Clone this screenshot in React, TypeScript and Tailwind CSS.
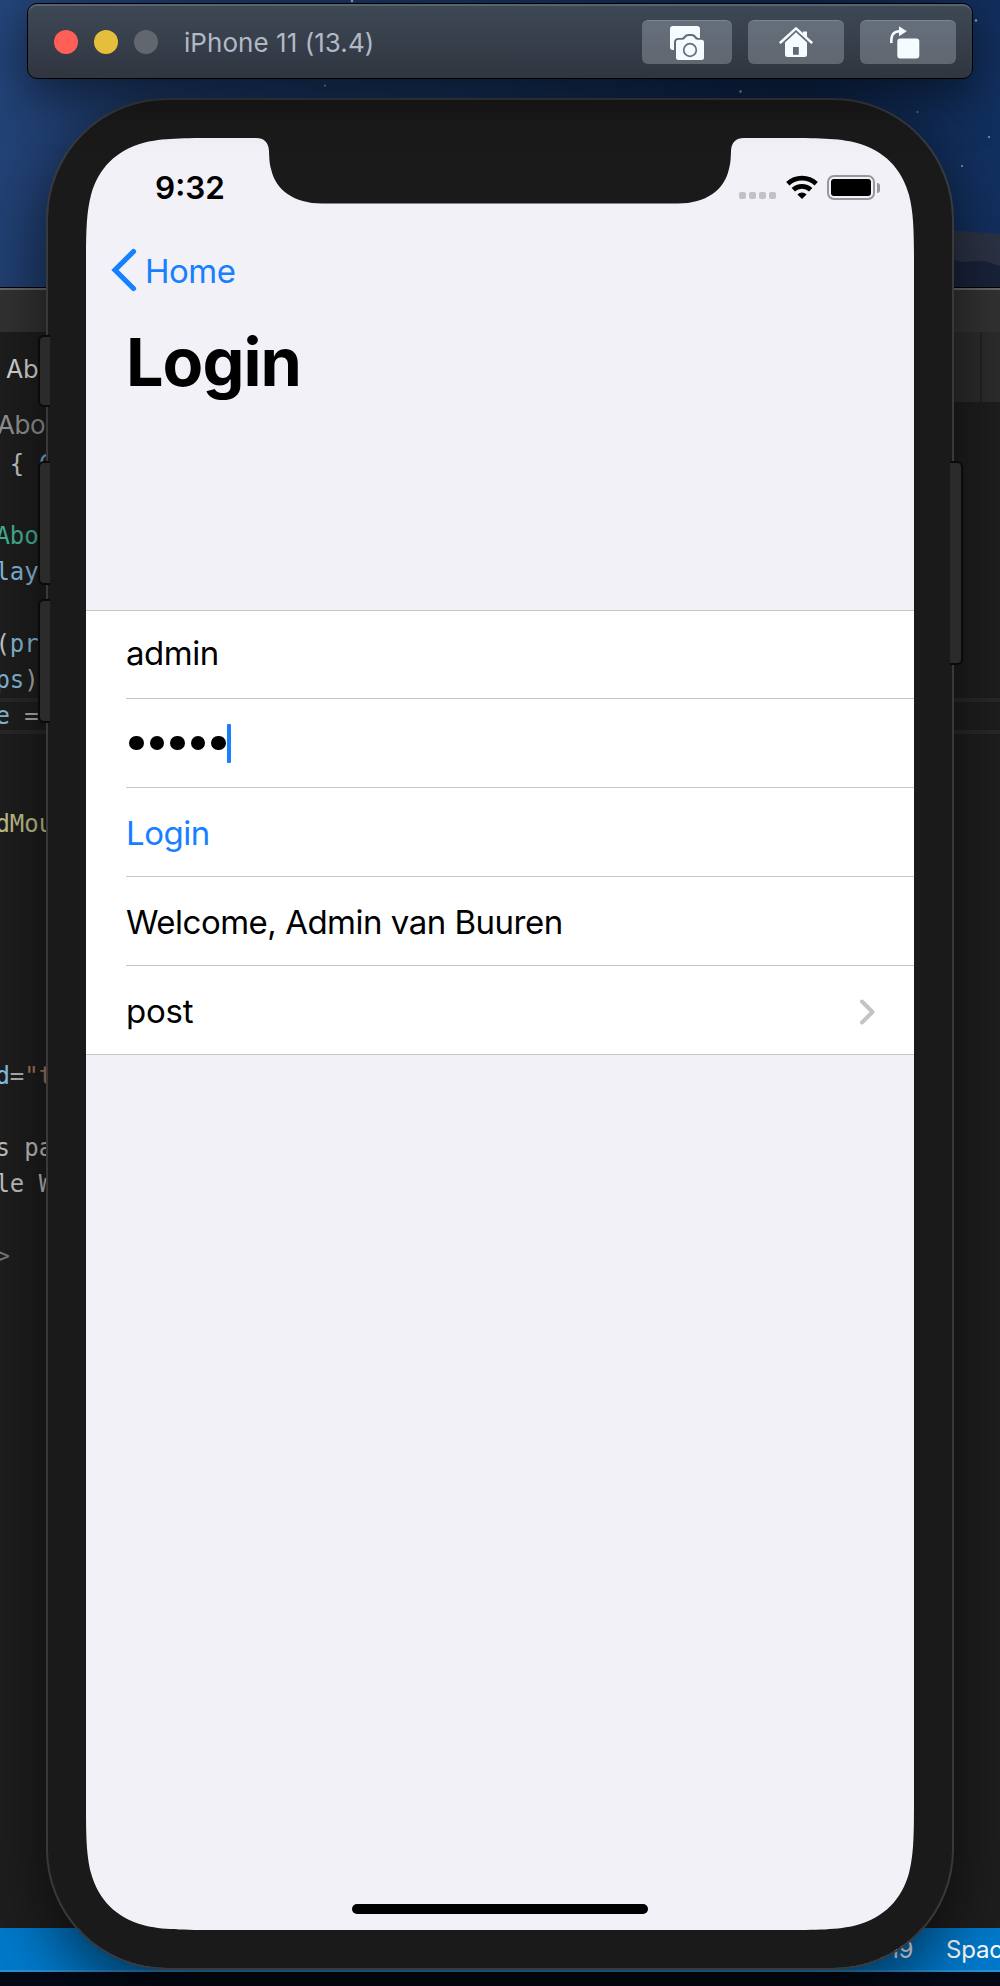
import React from "react";

type Token = { text: string; color: string };

const codeLines: Token[][] = [
  [{ text: " {", color: "text-[#c8c8c8]" }, { text: " C", color: "text-[#7fb4d4]" }],
  [],
  [{ text: "Abou", color: "text-[#45b59b]" }],
  [{ text: "layN", color: "text-[#86bcdc]" }],
  [],
  [{ text: "(", color: "text-[#c8c8c8]" }, { text: "pro", color: "text-[#86bcdc]" }],
  [{ text: "ps", color: "text-[#86bcdc]" }, { text: ")", color: "text-[#b0b0b0]" }],
  [{ text: "e", color: "text-[#86bcdc]" }, { text: " =", color: "text-[#b0b0b0]" }],
  [],
  [],
  [{ text: "dMou", color: "text-[#c4c48f]" }],
  [],
  [],
  [],
  [],
  [],
  [],
  [{ text: "d", color: "text-[#8cc8ee]" }, { text: "=", color: "text-[#b8b8b8]" }, { text: "\"t", color: "text-[#b07a62]" }],
  [],
  [{ text: "s pa", color: "text-[#c4c4c4]" }],
  [{ text: "le W", color: "text-[#c4c4c4]" }],
  [],
  [{ text: ">", color: "text-[#7a7a7a]" }],
];

function Wallpaper() {
  return (
    <div className="absolute inset-0 bg-[linear-gradient(100deg,#24447a_0px,#1b3865_180px,#14305a_500px,#0e2549_800px,#12305f_1000px)]">
      <svg className="absolute top-0 left-0" width="1000" height="290" viewBox="0 0 1000 290">
        <path d="M900 228 L922 226 L938 231 L954 230 L975 232 L1000 234 V290 H900Z" fill="#2c3345" />
        <path d="M900 248 L925 249 L940 256 L962 262 L985 261 L1000 266 V290 H900Z" fill="#19233a" />
        <g fill="#8fa3bf">
          <circle cx="352" cy="1" r="1.3" />
          <circle cx="976" cy="20.500" r="1.200" />
          <circle cx="325" cy="85.500" r="1" />
          <circle cx="740.500" cy="91.500" r="1.200" />
          <circle cx="917.500" cy="112" r=".8" />
          <circle cx="989" cy="137" r="1" />
          <circle cx="962" cy="166" r="1" />
        </g>
      </svg>
    </div>
  );
}

function EditorWindow() {
  return (
    <div className="absolute top-[287px] left-0 flex h-[1685px] w-full flex-col overflow-hidden border-t border-black bg-[#1e1e1e]">
      <div className="h-[44px] shrink-0 border-t-2 border-[#6a6a6a] bg-[#333333]" />
      <div className="flex h-[70px] shrink-0 bg-[#2d2d2d]">
        <div className="w-[500px] bg-[#1e1e1e] pt-[19px] pl-[6px] text-[25px] leading-[36px] text-[#dcdcdc]">About</div>
        <div className="w-[482px] border-r-2 border-[#232323]" />
      </div>
      <div className="-ml-[3px] h-[44px] shrink-0 pt-1 text-[26px] leading-[38px] tracking-[-0.400px] text-[#969696]">About</div>
      <div className="flex-1 font-['DejaVu_Sans_Mono',monospace] text-[24px] leading-[36px]">
        {codeLines.map((line, i) => (
          <div
            key={i}
            className={
              i === 7
                ? "flex h-[36px] items-center border-y-4 border-[#292929] whitespace-pre"
                : "flex h-[36px] items-center whitespace-pre"
            }
          >
            <span className="-ml-[4.6px]">
              {line.map((token, j) => (
                <span key={j} className={token.color}>{token.text}</span>
              ))}
            </span>
          </div>
        ))}
      </div>
      <div className="flex h-[44px] shrink-0 items-center justify-end gap-[33px] border-b-2 border-[#2b8fd6] bg-[#007acc] pt-px text-[24px] text-white">
        <span className="tracking-[-0.500px]">Col 19</span>
        <span className="w-[54px] overflow-hidden tracking-[-0.200px] whitespace-nowrap">Spaces: 4</span>
      </div>
    </div>
  );
}

function ScreenshotIcon() {
  return (
    <svg width="34" height="34" viewBox="0 0 34 34">
      <path d="M3 0H27Q30 0 30 3V12H28.500Q27 12 26 10.300Q24.500 8 21.500 8H18.500Q15.500 8 14 10.300Q13 12 11.500 12H8.500Q4 12 4 16.500V24H3Q0 24 0 21V3Q0 0 3 0Z" fill="#f5fcff" />
      <path d="M8.500 13.800H12.500Q14.500 13.800 15.500 11.800Q16.500 10 18.500 10H21.500Q23.500 10 24.500 11.800Q25.500 13.800 27.500 13.800H31.500Q34 13.800 34 16.300V31.500Q34 34 31.500 34H8.500Q6 34 6 31.500V16.300Q6 13.800 8.500 13.800Z" fill="#f5fcff" />
      <circle cx="20" cy="24" r="6.300" fill="none" stroke="#656e7b" strokeWidth="1.700" />
    </svg>
  );
}

function HomeIcon() {
  return (
    <svg width="34" height="31" viewBox="0 0 34 31">
      <path d="M1.500 15.500 L17 1.300 L32.500 15.500" fill="none" stroke="#f5fcff" strokeWidth="2.400" strokeLinecap="round" strokeLinejoin="round" />
      <path d="M24 4.500H28V11.500L24 8Z" fill="#f5fcff" />
      <path fillRule="evenodd" d="M17 5.300 L28 15.500 V27.500 Q28 30 25.500 30 H8.500 Q6 30 6 27.500 V15.500Z M14 20V27.800H19.800V20Z" fill="#f5fcff" />
    </svg>
  );
}

function RotateIcon() {
  return (
    <svg width="30" height="33" viewBox="0 0 30 33">
      <path d="M1.500 17 C0.500 9 3.500 5.400 9.500 5.200" fill="none" stroke="#f5fcff" strokeWidth="2.600" />
      <path d="M9 0.300 L16.800 5.200 L9 10.200Z" fill="#f5fcff" />
      <rect x="7.300" y="12.500" width="22" height="20" rx="3" fill="#f5fcff" />
    </svg>
  );
}

function SimulatorToolbar() {
  const button =
    "flex h-[44px] items-center justify-center rounded-[6px] border-t border-[#7b8591] bg-linear-to-b from-[#656f7c] to-[#62666f]";
  return (
    <div className="absolute top-[3px] left-[27px] flex h-[76px] w-[946px] items-center rounded-[10px] border border-black bg-linear-to-b from-[#3e4956] to-[#30353f] pt-[2px] pr-[16px] pl-[26px] shadow-[0_16px_50px_rgba(0,0,0,0.5),inset_0_2px_0_#59626e]">
      <div className="flex gap-4">
        <span className="size-6 rounded-full bg-[#ff5f57]" />
        <span className="size-6 rounded-full bg-[#e5bf3c]" />
        <span className="size-6 rounded-full bg-[#62676f]" />
      </div>
      <span className="ml-[26px] text-[26px] tracking-[0.050px] text-[#b0b9c7]">iPhone 11 (13.4)</span>
      <div className="ml-auto flex gap-4">
        <div className={button + " w-[90px]"}><ScreenshotIcon /></div>
        <div className={button + " w-[96px]"}><HomeIcon /></div>
        <div className={button + " w-[96px] pr-[6px]"}><RotateIcon /></div>
      </div>
    </div>
  );
}

function StatusBar() {
  return (
    <div className="flex h-[88px] justify-between pt-[37px] pr-[34px] pl-[69px]">
      <span className="text-[31.500px] leading-[26px] font-semibold">9:32</span>
      <div className="flex">
        <div className="flex gap-[3px] pt-[17px]">
          {[0, 1, 2, 3].map((n) => (
            <span key={n} className="size-[7px] rounded-[2px] bg-[#c2c1c6]" />
          ))}
        </div>
        <svg className="ml-[10px]" width="32" height="25" viewBox="0 0 32 25">
          <g fill="none" stroke="#000" strokeWidth="4.800">
            <path d="M1.800 8.800 A20.500 20.500 0 0 1 30.200 8.800" />
            <path d="M7.300 14.800 A12.600 12.600 0 0 1 24.700 14.800" />
          </g>
          <path d="M16 24 L11.400 19.400 A6.800 6.800 0 0 1 20.600 19.400Z" fill="#000" />
        </svg>
        <div className="ml-[9px] h-[25px] w-[48px] rounded-[7px] border-2 border-[#98979c] p-[2px]">
          <div className="h-full rounded-[3px] bg-black" />
        </div>
        <span className="mt-[8px] ml-[2px] h-[10px] w-[3px] rounded-r-full bg-[#98979c]" />
      </div>
    </div>
  );
}

function Row({ children, first = false, last = false }: { children: React.ReactNode; first?: boolean; last?: boolean }) {
  const base = "flex items-center pt-[3px] ";
  if (last) return <div className={base + "h-[88px] pr-[38px]"}>{children}</div>;
  return (
    <div className={base + "ml-[40px] border-b border-[#c6c6c8] " + (first ? "h-[88px]" : "h-[89px]")}>
      {children}
    </div>
  );
}

function PhoneScreen() {
  return (
    <div className="flex h-[1792px] w-[828px] flex-col bg-[#f2f1f7] text-black [clip-path:path('M0_131.5_C0_98_0_76_5_57_C12.5_30_30_12.5_57_5_C76_0_98_0_131.5_0_H170_C178_0_182.5_4_183_13_C183.3_22_183.6_26_185.300_32_C190_52_208_65.5_236_65.5_H592_C620_65.5_638_52_642.700_32_C644.4_26_644.700_22_645_13_C645.5_4_650_0_658_0_H696.5_C730_0_752_0_771_5_C798_12.5_815.5_30_823_57_C828_76_828_98_828_131.5_V1660.5_C828_1694_828_1716_823_1735_C815.5_1762_798_1779.5_771_1787_C752_1792_730_1792_696.5_1792_H131.5_C98_1792_76_1792_57_1787_C30_1779.5_12.5_1762_5_1735_C0_1716_0_1694_0_1660.5_Z')]">
      <StatusBar />
      <div className="flex h-[88px] items-center pl-[25px] text-[#1780ff]">
        <svg width="26" height="44" viewBox="0 0 26 44">
          <path d="M22.500 3.500 L4 22 L22.500 40.500" fill="none" stroke="currentColor" strokeWidth="5.200" strokeLinecap="round" strokeLinejoin="miter" />
        </svg>
        <span className="ml-[8px] pt-[3px] text-[33px] tracking-[-0.500px]">Home</span>
      </div>
      <h1 className="mt-[2px] ml-[40px] text-[66.500px] leading-[92px] font-bold tracking-[-1px]">Login</h1>
      <div className="mt-[202px] border-y border-[#c6c6c8] bg-white text-[33px] tracking-[-0.500px]">
        <Row first><span className="-mt-[5px]">admin</span></Row>
        <Row>
          <div className="-mt-[3px] flex items-center">
            <div className="flex items-center gap-[6px] pl-[3px]">
              {[0, 1, 2, 3, 4].map((n) => (
                <span key={n} className="size-[14.600px] rounded-full bg-black" />
              ))}
            </div>
            <span className="ml-px h-[39px] w-[4px] rounded-[1px] bg-[#1780ff]" />
          </div>
        </Row>
        <Row><span className="text-[#1780ff]">Login</span></Row>
        <Row><span>Welcome, Admin van Buuren</span></Row>
        <Row last>
          <span className="ml-[40px] tracking-[-0.200px]">post</span>
          <svg className="ml-auto" width="17" height="26" viewBox="0 0 17 26">
            <path d="M3 2.500 L13.500 13 L3 23.500" fill="none" stroke="#c4c4c7" strokeWidth="4" strokeLinecap="round" strokeLinejoin="round" />
          </svg>
        </Row>
      </div>
      <div className="mt-auto mb-[16px] h-[10px] w-[296px] self-center rounded-full bg-black" />
    </div>
  );
}

function Phone() {
  const leftButton = "absolute left-[-10px] w-[12px] rounded-l-[6px] border-2 border-r-0 border-[#0a0a0a] bg-[#2b2b2b]";
  return (
    <div className="absolute top-[98px] left-[46px] flex h-[1872px] w-[908px] items-center justify-center rounded-[121px] border-2 border-[#39393b] bg-[#1a1a1a] bg-clip-padding shadow-[0_24px_70px_rgba(0,0,0,0.6)]">
      <span className={leftButton + " top-[235px] h-[72px]"} />
      <span className={leftButton + " top-[361px] h-[124px]"} />
      <span className={leftButton + " top-[499px] h-[124px]"} />
      <span className="absolute top-[361px] right-[-11px] h-[204px] w-[13px] rounded-r-[6px] border-2 border-l-0 border-[#0a0a0a] bg-[#2b2b2b]" />
      <PhoneScreen />
    </div>
  );
}

export default function App() {
  return (
    <div className="relative h-[1986px] w-[1000px] overflow-hidden bg-[#020712] font-['Inter',sans-serif]">
      <Wallpaper />
      <div className="absolute bottom-0 left-0 h-[14px] w-full bg-[#030a16]" />
      <EditorWindow />
      <Phone />
      <SimulatorToolbar />
    </div>
  );
}
